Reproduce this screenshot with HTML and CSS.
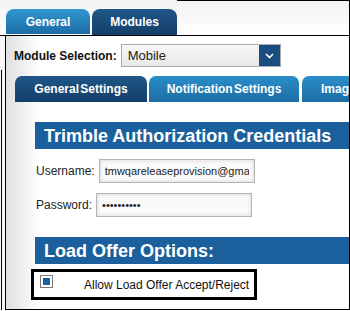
FILE: index.html
```html
<!DOCTYPE html>
<html lang="en">
<head>
    <meta charset="UTF-8">
    <meta name="viewport" content="width=device-width, initial-scale=1.0">
    <title>Module Settings</title>
    <link rel="stylesheet" href="styles.css">
</head>
<body>
    <div class="frame">
        <div class="topbar">
            <div class="tab">General</div>
            <div class="tab active">Modules</div>
            <div class="topfill"></div>
        </div>
        <div class="main">
            <div class="edge"></div>
            <div class="panel">
                <div class="selrow">
                    <span class="sellabel">Module Selection:</span>
                    <div class="select">
                        <span class="seltext">Mobile</span>
                        <span class="selbtn">
                            <svg width="9" height="6" viewBox="0 0 9 6"><path d="M1 1 L4.5 4.5 L8 1" fill="none" stroke="#fff" stroke-width="1.7"/></svg>
                        </span>
                    </div>
                </div>
                <div class="subtabs">
                    <div class="subtab active">General Settings</div>
                    <div class="subtab notif">Notification Settings</div>
                    <div class="subtab imaging">Imaging Settings</div>
                </div>
                <h2 class="sechead">Trimble Authorization Credentials</h2>
                <div class="field first">
                    <label for="user">Username:</label>
                    <input id="user" type="text" value="tmwqareleaseprovision@gmail.com">
                </div>
                <div class="field">
                    <label for="pass">Password:</label>
                    <input id="pass" type="password" value="abcdefghij">
                </div>
                <h2 class="sechead">Load Offer Options:</h2>
                <div class="checkrow">
                    <span class="check"><span class="checkmark"></span></span>
                    <span class="checklabel">Allow Load Offer Accept/Reject</span>
                </div>
            </div>
        </div>
    </div>
</body>
</html>
```

FILE: styles.css
```css
body {
    margin: 0;
    padding: 0;
    background: #fff;
    font-family: "Liberation Sans", Arial, sans-serif;
    color: #222;
}
.frame {
    width: 350px;
    height: 310px;
    display: flex;
    flex-direction: column;
}
.topbar {
    height: 36px;
    box-sizing: border-box;
    border-bottom: 1px solid #000;
    display: flex;
    align-items: flex-end;
    padding-left: 6px;
    background: linear-gradient(#f3f3f3, #fff);
}
.tab {
    width: 84px;
    height: 25px;
    margin-bottom: 1px;
    border-radius: 8px 8px 0 0;
    background: linear-gradient(#3196d0, #1c6ca4);
    color: #fff;
    font-size: 12px;
    font-weight: bold;
    line-height: 26px;
    text-align: center;
}
.tab.active {
    width: 85px;
    height: 26px;
    margin-bottom: 0;
    margin-left: 2px;
    background: linear-gradient(#1f5788, #153e68);
}
.topfill {
    flex: 1;
    align-self: stretch;
    border-top: 1px solid #000;
    border-right: 1px solid #000;
}
.main {
    flex: 1;
    display: flex;
    background: linear-gradient(to right, #f6f6f6, #e4e4e4);
}
.edge {
    width: 1px;
    margin: 34px 3px 0 1px;
    background: #000;
}
.panel {
    flex: 1;
    min-width: 0;
    overflow: hidden;
    border-left: 1px solid #000;
    border-right: 1px solid #000;
    border-bottom: 1px solid #000;
    background: linear-gradient(to right, #e0e0e0, #fff 34px);
}
.selrow {
    display: flex;
    align-items: center;
    margin: 8px 0 0 8px;
}
.sellabel {
    font-size: 12px;
    font-weight: bold;
    color: #111;
}
.select {
    width: 160px;
    height: 23px;
    box-sizing: border-box;
    margin-left: 4px;
    border: 1px solid #a8a8a8;
    display: flex;
    background: linear-gradient(#f8f8f8, #e8e8e8);
}
.seltext {
    padding-left: 6px;
    font-size: 13px;
    line-height: 21px;
    color: #222;
}
.selbtn {
    margin-left: auto;
    width: 21px;
    background: #1b4e80;
    display: flex;
    align-items: center;
    justify-content: center;
}
.subtabs {
    display: flex;
    gap: 2px;
    margin: 9px 0 0 9px;
}
.subtab {
    flex-shrink: 0;
    height: 26px;
    border-radius: 7px 7px 0 0;
    background: linear-gradient(#2a8ecb, #1d6ca3);
    color: #fff;
    font-size: 12px;
    font-weight: bold;
    line-height: 27px;
    text-align: center;
    white-space: nowrap;
    word-spacing: -2px;
}
.subtab.active {
    width: 132px;
    background: linear-gradient(#1f5686, #153f69);
}
.subtab.notif {
    width: 150px;
}
.subtab.imaging {
    margin-left: 1px;
    padding: 0 19px;
}
.sechead {
    margin: 20px 0 0 29px;
    height: 27px;
    padding-left: 9px;
    background: #1b5f9c;
    color: #fff;
    font-size: 18px;
    font-weight: bold;
    line-height: 28px;
    white-space: nowrap;
}
.field {
    display: flex;
    align-items: center;
    gap: 4px;
    margin: 10px 0 0 30px;
}
.field label {
    font-size: 12px;
    color: #222;
}
.field input {
    width: 156px;
    height: 24px;
    box-sizing: border-box;
    margin: 0;
    padding: 0 5px;
    border: 1px solid #b4b4b4;
    border-radius: 0;
    background: #fafafa;
    box-shadow: inset 0 0 4px #d4d4d4;
    font-family: "Liberation Sans", Arial, sans-serif;
    font-size: 11px;
    color: #222;
}
.checkrow {
    display: flex;
    align-items: center;
    width: 226px;
    height: 31px;
    box-sizing: border-box;
    margin: 5px 0 0 25px;
    border: 3px solid #000;
    background: #fff;
}
.check {
    align-self: flex-start;
    margin: 3px 0 0 6px;
    width: 13px;
    height: 13px;
    box-sizing: border-box;
    border: 1px solid #7a7a7a;
    padding: 2px;
    background: #fff;
}
.checkmark {
    display: block;
    width: 7px;
    height: 7px;
    background: #1b5f9c;
}
.checklabel {
    margin-left: 31px;
    font-size: 12px;
    color: #111;
}
```
